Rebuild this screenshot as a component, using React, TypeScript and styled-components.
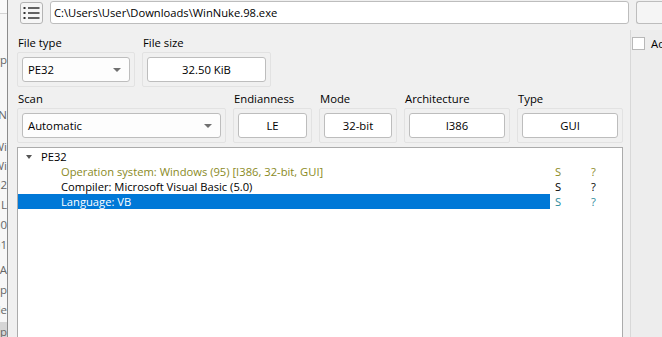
import React from 'react';
import styled, { createGlobalStyle } from 'styled-components';

const GlobalStyle = createGlobalStyle`
  html, body {
    margin: 0;
    padding: 0;
    width: 662px;
    height: 337px;
    overflow: hidden;
    background: #f0f0f0;
  }
  body {
    font-family: "Open Sans", "Noto Sans", sans-serif;
    font-size: 11.3px;
    color: #000;
  }
`;

const Screen = styled.div`
  display: flex;
  width: 662px;
  height: 337px;
  overflow: hidden;
`;

const BehindWindow = styled.div`
  width: 7px;
  flex: none;
  background: #f7f7f7;
  border-right: 1px solid #8c8c8c;
  display: flex;
  flex-direction: column;
`;

const BehindTop = styled.div`
  height: 13px;
  flex: none;
  border-bottom: 1px solid #d4d4d4;
  background: #fafafa;
`;

const BehindLine = styled.div<{ $shade?: boolean; $h: number }>`
  height: ${(p) => p.$h}px;
  flex: none;
  line-height: ${(p) => p.$h}px;
  white-space: nowrap;
  overflow: hidden;
  direction: rtl;
  text-align: right;
  color: #666;
  font-size: 11.5px;
  background: ${(p) => (p.$shade ? '#d6d6d6' : 'transparent')};
`;

const Main = styled.div`
  flex: 1;
  display: flex;
  flex-direction: column;
  min-width: 0;
`;

const TopBar = styled.div`
  height: 29px;
  display: flex;
  align-items: flex-start;
  gap: 7px;
  padding: 1px 0 0 12px;
  box-sizing: border-box;
`;

const IconButton = styled.div`
  width: 23px;
  height: 22px;
  margin-top: 1px;
  box-sizing: border-box;
  border: 1px solid #b4b4b4;
  border-radius: 3px;
  background: #f6f6f6;
  display: flex;
  align-items: center;
  justify-content: center;
  flex: none;
`;

const PathField = styled.div`
  width: 579px;
  height: 23px;
  flex: none;
  box-sizing: border-box;
  border: 1px solid #bdbdbd;
  border-radius: 3px;
  background: #fff;
  padding-left: 3px;
  display: flex;
  align-items: center;
  font-size: 11.2px;
`;

const EdgeButton = styled.div`
  flex: 1;
  height: 23px;
  box-sizing: border-box;
  border: 1px solid #bdbdbd;
  border-right: none;
  border-radius: 3px 0 0 3px;
  background: #f5f5f5;
`;

const Body = styled.div`
  flex: 1;
  display: flex;
  min-height: 0;
`;

const Content = styled.div`
  width: 606px;
  flex: none;
  padding: 6px 0 0 9px;
  display: flex;
  flex-direction: column;
`;

const FieldRow = styled.div`
  display: flex;
  gap: 7px;
  margin-bottom: 4px;
`;

const Field = styled.div<{ $w: number }>`
  width: ${(p) => p.$w}px;
  display: flex;
  flex-direction: column;
`;

const Label = styled.div`
  height: 17px;
  line-height: 15px;
  padding-left: 1px;
`;

const GroupBox = styled.div`
  height: 35px;
  box-sizing: border-box;
  border: 1px solid #e2e2e2;
  border-radius: 2px;
  padding: 4px;
`;

const Combo = styled.div`
  height: 25px;
  box-sizing: border-box;
  border: 1px solid #bdbdbd;
  border-radius: 3px;
  background: #fdfdfd;
  display: flex;
  align-items: center;
  justify-content: space-between;
  padding: 0 8px 0 5px;
`;

const Arrow = styled.span`
  width: 0;
  height: 0;
  border-left: 4px solid transparent;
  border-right: 4px solid transparent;
  border-top: 4px solid #707070;
`;

const ValueBox = styled.div`
  height: 25px;
  box-sizing: border-box;
  border: 1px solid #bdbdbd;
  border-radius: 3px;
  background: #fff;
  display: flex;
  align-items: center;
  justify-content: center;
`;

const Tree = styled.div`
  flex: 1;
  background: #fff;
  border: 1px solid #ababab;
  border-bottom: none;
  padding-top: 1px;
  display: flex;
  flex-direction: column;
`;

const TreeRow = styled.div<{ $color: string; $selected?: boolean; $sideColor?: string }>`
  display: flex;
  height: 15px;
  line-height: 15px;
  font-size: 11.2px;
  overflow: hidden;
  color: ${(p) => p.$color};

  .name {
    width: 533px;
    display: flex;
    align-items: center;
    background: ${(p) => (p.$selected ? '#0078d7' : 'transparent')};
    color: ${(p) => (p.$selected ? '#fff' : p.$color)};
  }
  .cell {
    color: ${(p) => p.$sideColor ?? p.$color};
  }
`;

const Expander = styled.span`
  width: 0;
  height: 0;
  margin: 0 9px 0 8px;
  border-left: 3.5px solid transparent;
  border-right: 3.5px solid transparent;
  border-top: 4px solid #555;
`;

const Indent = styled.span<{ $w: number }>`
  width: ${(p) => p.$w}px;
  flex: none;
`;

const Cell = styled.span<{ $w: number }>`
  width: ${(p) => p.$w}px;
  padding-left: 5px;
  box-sizing: border-box;
`;

const SidePanel = styled.div`
  flex: 1;
  margin-left: 7px;
  margin-top: 1px;
  border-left: 1px solid #d8d8d8;
  background: #ededed;
  padding: 6px 0 0 1px;
`;

const CheckRow = styled.div`
  display: flex;
  align-items: center;
  gap: 6px;
  white-space: nowrap;
`;

const CheckBox = styled.span`
  width: 13px;
  height: 13px;
  box-sizing: border-box;
  border: 1px solid #b8b8b8;
  background: #fff;
  flex: none;
`;

const ListIcon = () => (
  <svg width="17" height="14" viewBox="0 0 17 14">
    {[2, 7, 12].map((y) => (
      <g key={y} fill="#333">
        <rect x="0.5" y={y - 1} width="2" height="2" />
        <rect x="5" y={y - 0.75} width="11.5" height="1.5" />
      </g>
    ))}
  </svg>
);

// partial text of the window lying behind, clipped at its right edge
const behind = [
  { t: '', h: 36 },
  { t: 'Typ', h: 20 },
  { t: '', h: 35 },
  { t: 'N', h: 20 },
  { t: '', h: 12 },
  { t: 'Wi', h: 20 },
  { t: 'Wi', h: 18 },
  { t: '02', h: 20 },
  { t: 'L', h: 20 },
  { t: '00', h: 20 },
  { t: '01', h: 20 },
  { t: '', h: 5 },
  { t: 'A', h: 20 },
  { t: 'pp', h: 20 },
  { t: 'le', h: 20 },
  { t: '', h: 2 },
];

type Row = {
  depth: number;
  text: string;
  color: string;
  side?: string;
  selected?: boolean;
  expander?: boolean;
  s?: string;
  q?: string;
};

const rows: Row[] = [
  { depth: 0, text: 'PE32', color: '#000', expander: true },
  { depth: 1, text: 'Operation system: Windows (95) [I386, 32-bit, GUI]', color: '#8a8a1e', s: 'S', q: '?' },
  { depth: 1, text: 'Compiler: Microsoft Visual Basic (5.0)', color: '#000', s: 'S', q: '?' },
  { depth: 1, text: 'Language: VB', color: '#000', side: '#2b8a9c', selected: true, s: 'S', q: '?' },
];

export default function App() {
  return (
    <>
      <GlobalStyle />
      <Screen>
        <BehindWindow>
          <BehindTop />
          {behind.map((b, i) => (
            <BehindLine key={i} $h={b.h}>{b.t}</BehindLine>
          ))}
          <BehindLine $h={20} $shade>op</BehindLine>
        </BehindWindow>
        <Main>
          <TopBar>
            <IconButton><ListIcon /></IconButton>
            <PathField>C:\Users\User\Downloads\WinNuke.98.exe</PathField>
            <EdgeButton />
          </TopBar>
          <Body>
            <Content>
              <FieldRow>
                <Field $w={118}>
                  <Label>File type</Label>
                  <GroupBox><Combo>PE32<Arrow /></Combo></GroupBox>
                </Field>
                <Field $w={129}>
                  <Label>File size</Label>
                  <GroupBox><ValueBox>32.50 KiB</ValueBox></GroupBox>
                </Field>
              </FieldRow>
              <FieldRow>
                <Field $w={209}>
                  <Label>Scan</Label>
                  <GroupBox><Combo>Automatic<Arrow /></Combo></GroupBox>
                </Field>
                <Field $w={79}>
                  <Label>Endianness</Label>
                  <GroupBox><ValueBox>LE</ValueBox></GroupBox>
                </Field>
                <Field $w={78}>
                  <Label>Mode</Label>
                  <GroupBox><ValueBox>32-bit</ValueBox></GroupBox>
                </Field>
                <Field $w={106}>
                  <Label>Architecture</Label>
                  <GroupBox><ValueBox>I386</ValueBox></GroupBox>
                </Field>
                <Field $w={106}>
                  <Label>Type</Label>
                  <GroupBox><ValueBox>GUI</ValueBox></GroupBox>
                </Field>
              </FieldRow>
              <Tree>
                {rows.map((r, i) => (
                  <TreeRow key={i} $color={r.color} $selected={r.selected} $sideColor={r.side}>
                    <span className="name">
                      {r.expander ? <Expander /> : <Indent $w={r.depth * 20 + 23} />}
                      {r.text}
                    </span>
                    <Cell $w={36} className="cell">{r.s}</Cell>
                    <Cell $w={36} className="cell">{r.q}</Cell>
                  </TreeRow>
                ))}
              </Tree>
            </Content>
            <SidePanel>
              <CheckRow><CheckBox />Advanced</CheckRow>
            </SidePanel>
          </Body>
        </Main>
      </Screen>
    </>
  );
}
